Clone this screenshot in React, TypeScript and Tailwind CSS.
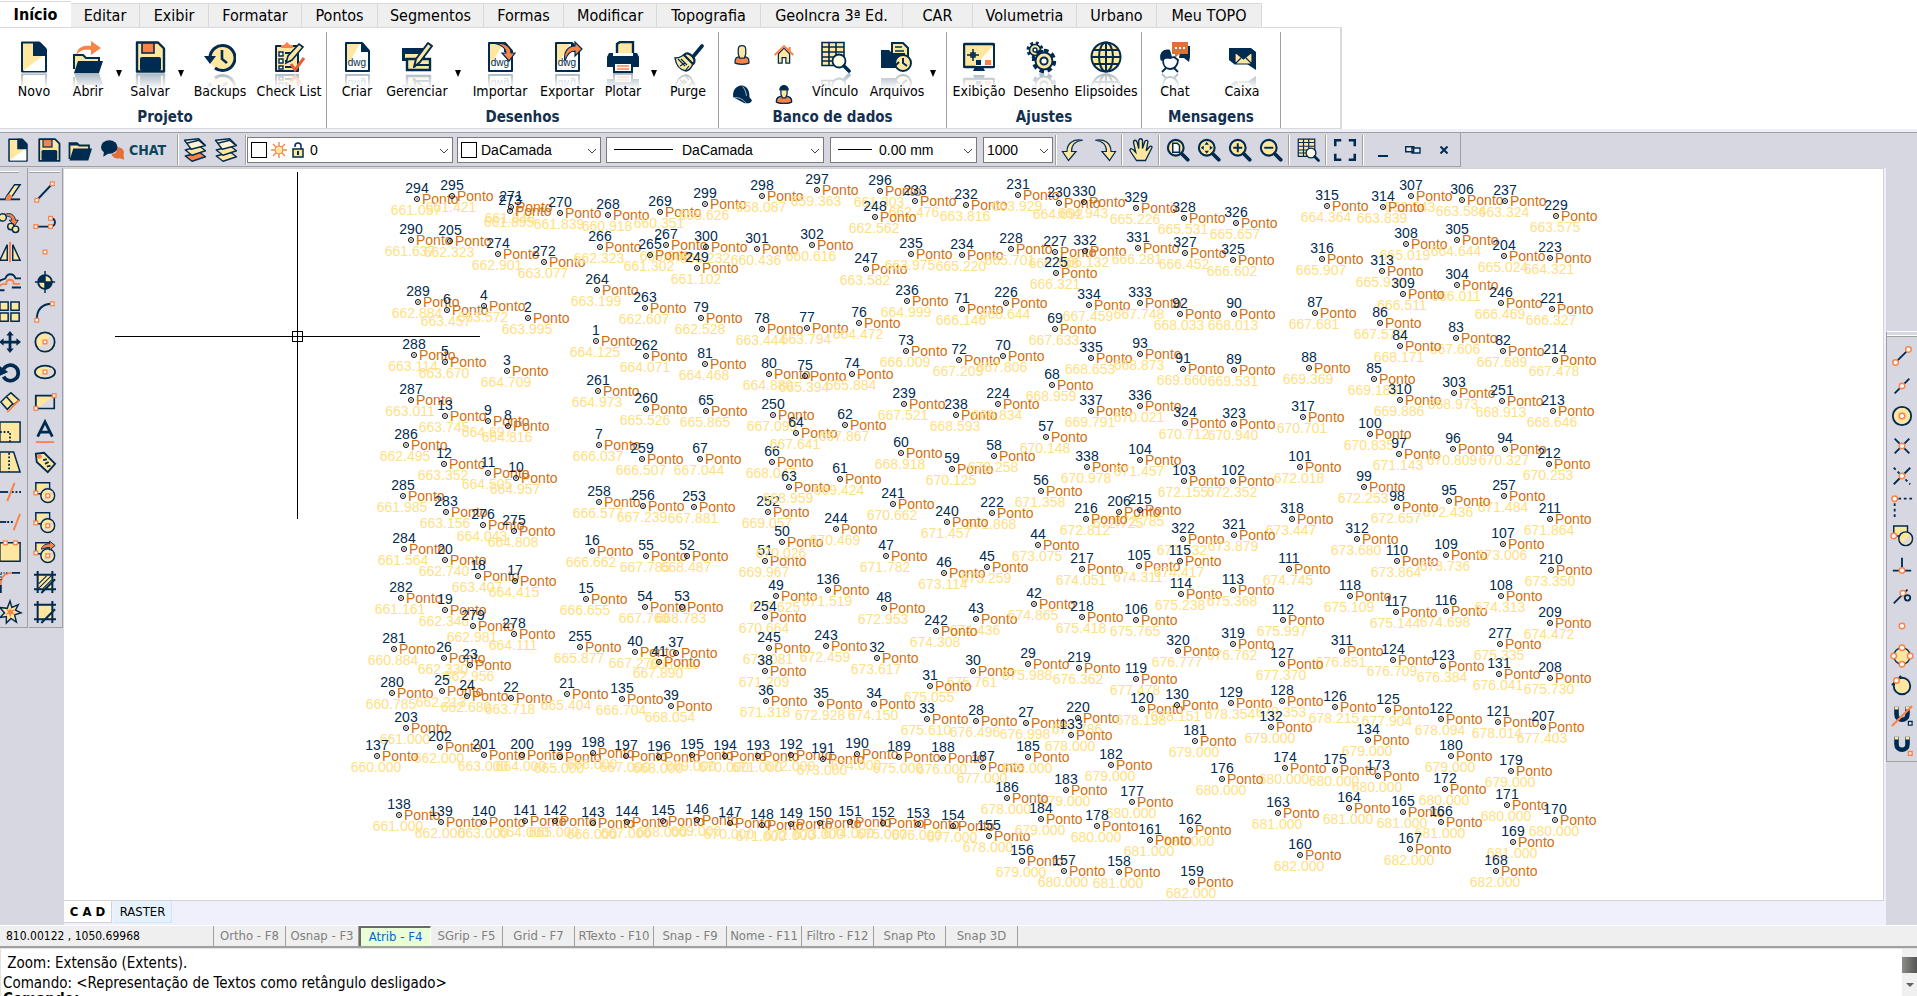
import { Fragment, ReactNode, useState } from "react";
import clsx from "clsx";

const NAVY = "#002b50";
const SAND = "#ffe7a0";
const ORANGE = "#f98348";

// id, x, y, elevation
type SurveyPoint = [number, number, number, string];

const POINTS: SurveyPoint[] = [
  [294, 353, 30, "661.057"], [295, 388, 27, "661.421"], [271, 447, 38, "661.848"], [273, 446, 42, "661.895"],
  [270, 496, 44, "661.839"], [268, 544, 46, "660.918"], [269, 596, 43, "660.351"], [299, 641, 35, "658.626"],
  [298, 698, 27, "658.087"], [290, 347, 71, "661.637"], [205, 386, 72, "662.323"], [274, 434, 85, "662.901"],
  [272, 480, 93, "663.077"], [266, 536, 78, "662.323"], [267, 602, 76, "660.888"], [265, 586, 86, "661.302"],
  [300, 642, 78, "660.232"], [301, 693, 80, "660.436"], [249, 633, 99, "661.102"], [289, 354, 133, "662.884"],
  [6, 383, 141, "663.457"], [4, 420, 137, "663.572"], [2, 464, 149, "663.995"], [264, 533, 121, "663.199"],
  [263, 581, 139, "662.607"], [79, 637, 149, "662.528"], [78, 698, 160, "663.444"], [288, 350, 186, "663.114"],
  [5, 381, 193, "663.670"], [3, 443, 202, "664.709"], [1, 532, 172, "664.125"], [262, 582, 187, "664.071"],
  [81, 641, 195, "664.468"], [80, 705, 205, "664.880"], [287, 347, 231, "663.011"], [13, 381, 247, "663.745"],
  [9, 424, 252, "664.697"], [8, 444, 257, "664.816"], [261, 534, 222, "664.973"], [260, 582, 240, "665.526"],
  [65, 642, 242, "665.865"], [250, 709, 246, "667.099"], [286, 342, 276, "662.495"], [12, 380, 295, "663.352"],
  [11, 424, 304, "664.505"], [10, 452, 309, "664.957"], [7, 535, 276, "666.037"], [259, 578, 290, "666.507"],
  [67, 636, 290, "667.044"], [66, 708, 293, "668.047"], [285, 339, 327, "661.985"], [258, 535, 333, "666.577"],
  [256, 579, 337, "667.239"], [253, 630, 338, "667.881"], [283, 382, 343, "663.156"], [252, 704, 343, "669.057"],
  [276, 419, 356, "664.043"], [275, 450, 362, "664.808"], [297, 753, 21, "659.363"], [296, 816, 22, "661.303"],
  [233, 851, 32, "662.476"], [232, 902, 36, "663.816"], [231, 954, 26, "663.929"], [230, 995, 34, "664.692"],
  [330, 1020, 33, "664.943"], [329, 1072, 39, "665.226"], [328, 1120, 49, "665.531"], [248, 811, 48, "662.562"],
  [302, 748, 76, "660.616"], [247, 802, 100, "663.582"], [235, 847, 85, "663.975"], [234, 898, 86, "665.220"],
  [228, 947, 80, "665.701"], [227, 991, 83, "666.008"], [332, 1021, 82, "666.132"], [331, 1074, 79, "666.281"],
  [327, 1121, 84, "666.452"], [225, 992, 104, "666.321"], [236, 843, 132, "664.999"], [71, 898, 140, "666.146"],
  [226, 942, 134, "666.644"], [334, 1025, 136, "667.459"], [333, 1076, 134, "667.748"], [92, 1116, 145, "668.033"],
  [77, 743, 159, "663.794"], [76, 795, 154, "664.472"], [69, 991, 160, "667.633"], [73, 842, 182, "666.009"],
  [72, 895, 191, "667.209"], [70, 939, 187, "667.806"], [335, 1027, 189, "668.653"], [93, 1076, 185, "668.873"],
  [91, 1119, 200, "669.660"], [75, 741, 207, "665.394"], [74, 788, 205, "665.884"], [68, 988, 216, "668.959"],
  [239, 840, 235, "667.521"], [238, 892, 246, "668.593"], [224, 934, 235, "668.834"], [337, 1027, 242, "669.791"],
  [336, 1076, 237, "670.021"], [324, 1121, 254, "670.712"], [64, 732, 264, "667.641"], [62, 781, 256, "667.867"],
  [57, 982, 268, "670.148"], [60, 837, 284, "668.918"], [59, 888, 300, "670.125"], [58, 930, 287, "670.258"],
  [338, 1023, 298, "670.978"], [104, 1076, 291, "671.457"], [103, 1120, 312, "672.155"], [63, 725, 318, "668.959"],
  [61, 776, 310, "669.424"], [56, 977, 322, "671.358"], [241, 829, 335, "670.662"], [222, 928, 344, "671.868"],
  [206, 1055, 343, "672.725"], [215, 1076, 341, "672.785"], [216, 1022, 350, "672.812"], [326, 1172, 54, "665.657"],
  [315, 1263, 37, "664.364"], [307, 1347, 27, "663.543"], [314, 1319, 38, "663.839"], [306, 1398, 31, "663.584"],
  [237, 1441, 32, "663.324"], [229, 1492, 47, "663.575"], [308, 1342, 75, "665.019"], [305, 1393, 71, "664.644"],
  [204, 1440, 87, "665.024"], [223, 1486, 89, "664.321"], [325, 1169, 91, "666.602"], [316, 1258, 90, "665.907"],
  [313, 1318, 102, "665.916"], [304, 1393, 116, "666.011"], [309, 1339, 125, "666.511"], [246, 1437, 134, "666.469"],
  [221, 1488, 140, "666.327"], [90, 1170, 145, "668.013"], [87, 1251, 144, "667.681"], [86, 1316, 154, "667.570"],
  [83, 1392, 169, "667.606"], [84, 1336, 177, "668.171"], [82, 1439, 182, "667.689"], [214, 1491, 191, "667.478"],
  [89, 1170, 201, "669.531"], [88, 1245, 199, "669.369"], [85, 1310, 210, "669.185"], [310, 1336, 231, "669.886"],
  [303, 1390, 224, "668.973"], [251, 1438, 232, "668.913"], [213, 1489, 242, "668.646"], [317, 1239, 248, "670.701"],
  [323, 1170, 255, "670.940"], [100, 1306, 265, "670.835"], [97, 1335, 285, "671.143"], [96, 1389, 280, "670.809"],
  [94, 1441, 280, "670.327"], [212, 1485, 295, "670.253"], [101, 1236, 298, "672.018"], [102, 1169, 312, "672.352"],
  [99, 1300, 318, "672.253"], [257, 1440, 327, "671.484"], [95, 1385, 332, "672.436"], [98, 1333, 338, "672.657"],
  [318, 1228, 350, "673.447"], [211, 1486, 350, "671.864"], [284, 340, 380, "661.564"], [20, 381, 391, "662.740"],
  [18, 414, 407, "663.407"], [17, 451, 412, "664.415"], [16, 528, 382, "666.662"], [55, 582, 387, "667.785"],
  [52, 623, 387, "668.487"], [51, 701, 392, "669.967"], [282, 337, 429, "661.161"], [19, 381, 441, "662.348"],
  [279, 409, 457, "662.981"], [278, 450, 465, "664.111"], [15, 522, 430, "666.655"], [54, 581, 438, "667.760"],
  [53, 618, 438, "668.783"], [49, 712, 427, "670.625"], [254, 701, 448, "670.664"], [281, 330, 480, "660.884"],
  [26, 380, 489, "662.330"], [23, 406, 496, "662.956"], [255, 516, 478, "665.877"], [40, 571, 483, "667.270"],
  [37, 612, 484, "668.320"], [41, 595, 493, "667.890"], [245, 705, 479, "671.081"], [38, 701, 502, "671.209"],
  [280, 328, 524, "660.785"], [25, 378, 522, "662.213"], [24, 403, 527, "662.680"], [22, 447, 529, "663.718"],
  [21, 503, 525, "665.404"], [135, 558, 530, "666.704"], [39, 607, 537, "668.054"], [36, 702, 532, "671.318"],
  [203, 342, 559, "661.000"], [202, 376, 578, "662.000"], [137, 313, 587, "660.000"], [201, 420, 586, "663.000"],
  [200, 458, 586, "664.000"], [199, 496, 588, "665.000"], [198, 529, 584, "666.000"], [197, 562, 587, "667.000"],
  [196, 595, 588, "668.000"], [195, 628, 586, "669.000"], [194, 661, 587, "670.000"], [193, 694, 587, "671.000"],
  [192, 727, 586, "672.000"], [191, 759, 590, "673.000"], [190, 793, 585, "674.000"], [189, 835, 588, "675.000"],
  [188, 879, 589, "676.000"], [187, 919, 598, "677.000"], [185, 964, 588, "678.000"], [138, 335, 646, "661.000"],
  [139, 377, 653, "662.000"], [140, 420, 653, "663.000"], [141, 461, 652, "664.000"], [142, 491, 652, "665.000"],
  [143, 529, 654, "666.000"], [144, 563, 653, "667.000"], [145, 599, 652, "668.000"], [146, 633, 651, "669.000"],
  [147, 666, 654, "670.000"], [148, 698, 656, "671.000"], [149, 727, 655, "672.000"], [150, 756, 654, "673.000"],
  [151, 786, 653, "674.000"], [152, 819, 654, "675.000"], [153, 854, 655, "676.000"], [154, 889, 657, "677.000"],
  [155, 925, 667, "678.000"], [156, 958, 692, "679.000"], [157, 1000, 702, "680.000"], [158, 1055, 703, "681.000"],
  [159, 1128, 713, "682.000"], [50, 718, 373, "670.026"], [244, 772, 360, "670.469"], [240, 883, 353, "671.457"],
  [44, 974, 376, "673.075"], [47, 822, 387, "671.782"], [46, 880, 404, "673.114"], [45, 923, 398, "673.259"],
  [217, 1018, 400, "674.051"], [105, 1075, 397, "674.311"], [322, 1119, 370, "673.732"], [115, 1116, 392, "674.417"],
  [114, 1117, 425, "675.238"], [136, 764, 421, "671.519"], [48, 820, 439, "672.953"], [43, 912, 450, "674.436"],
  [42, 970, 435, "674.865"], [242, 872, 462, "674.308"], [218, 1018, 448, "675.418"], [106, 1072, 451, "675.765"],
  [243, 762, 477, "672.459"], [32, 813, 489, "673.617"], [30, 909, 502, "675.761"], [29, 964, 495, "675.988"],
  [219, 1015, 499, "676.362"], [119, 1072, 510, "677.478"], [320, 1114, 482, "676.777"], [31, 866, 517, "675.055"],
  [35, 757, 535, "672.928"], [34, 810, 535, "674.150"], [33, 863, 550, "675.610"], [28, 912, 552, "676.496"],
  [27, 962, 554, "676.998"], [220, 1014, 549, "677.786"], [133, 1007, 566, "678.000"], [120, 1078, 540, "678.198"],
  [130, 1113, 536, "678.151"], [181, 1131, 572, "679.000"], [182, 1047, 596, "679.000"], [183, 1002, 621, "679.000"],
  [186, 943, 629, "678.000"], [177, 1068, 633, "680.000"], [184, 977, 650, "679.000"], [178, 1033, 657, "680.000"],
  [162, 1126, 661, "680.000"], [161, 1086, 671, "681.000"], [321, 1170, 366, "673.879"], [312, 1293, 370, "673.680"],
  [110, 1333, 392, "673.864"], [109, 1382, 386, "673.736"], [107, 1439, 375, "673.006"], [210, 1487, 401, "673.350"],
  [111, 1225, 400, "674.745"], [113, 1169, 421, "675.368"], [118, 1286, 427, "675.109"], [117, 1332, 443, "675.144"],
  [116, 1382, 442, "674.698"], [108, 1437, 427, "674.313"], [209, 1486, 454, "674.472"], [112, 1219, 451, "675.997"],
  [319, 1169, 475, "676.762"], [311, 1278, 482, "676.851"], [124, 1329, 491, "676.709"], [123, 1379, 497, "676.384"],
  [277, 1436, 475, "675.335"], [131, 1435, 505, "676.041"], [208, 1486, 509, "675.730"], [127, 1218, 495, "677.370"],
  [129, 1167, 534, "678.354"], [128, 1218, 532, "678.353"], [126, 1271, 538, "678.215"], [125, 1324, 541, "677.904"],
  [122, 1377, 550, "678.094"], [121, 1434, 553, "678.014"], [207, 1479, 558, "677.403"], [132, 1207, 558, "679.000"],
  [134, 1304, 571, "679.000"], [180, 1387, 587, "679.000"], [174, 1221, 599, "680.000"], [175, 1271, 601, "680.000"],
  [173, 1314, 607, "680.000"], [179, 1447, 602, "679.000"], [176, 1158, 610, "680.000"], [172, 1381, 620, "680.000"],
  [163, 1214, 644, "681.000"], [164, 1285, 639, "681.000"], [165, 1339, 643, "681.000"], [166, 1377, 653, "681.000"],
  [171, 1443, 636, "680.000"], [170, 1491, 651, "680.000"], [169, 1449, 673, "681.000"], [168, 1432, 702, "682.000"],
  [167, 1346, 680, "682.000"], [160, 1236, 686, "682.000"],
];

const dwgPage = (
  <>
    <path d="M5 2h16l7 8v20H5z" fill="#fff" stroke={NAVY} strokeWidth="2" strokeLinejoin="round" />
    <path d="M6 3h13L6 25z" fill={SAND} />
    <path d="M20 2h2l6 7v2h-8z" fill={NAVY} />
    <text x="16" y="25" textAnchor="middle" fontSize="10" fontFamily="Liberation Sans, sans-serif" fill={NAVY}>
      dwg
    </text>
  </>
);

const newPage = (
  <>
    <path d="M4 1.5h17l7 7v22H4z" fill={SAND} stroke={NAVY} strokeWidth="2" strokeLinejoin="round" />
    <path d="M5 30L27 13v17z" fill="#fff" />
    <path d="M15 1h7l6 6v8H15z" fill={NAVY} />
  </>
);

const floppy = (
  <>
    <path d="M3 1.5h21l6 6v23H3z" fill={SAND} stroke={NAVY} strokeWidth="2.4" strokeLinejoin="round" />
    <rect x="8" y="2" width="12" height="10" fill={ORANGE} stroke={NAVY} strokeWidth="1.6" />
    <rect x="6" y="16" width="21" height="14" rx="2" fill={NAVY} />
  </>
);

const folder = (
  <>
    <path d="M2 28V7h10l3 3h13v6" fill={SAND} stroke={NAVY} strokeWidth="2.4" />
    <path d="M2 7h10l3 3H2z" fill={NAVY} />
    <path d="M7 14h25l-5 16H2z" fill={NAVY} />
  </>
);

const gridSheet = (
  <>
    <path d="M3 1.5h22v23H3z" fill={SAND} />
    <path d="M3 1.5h22v23H3zM3 6h22M3 11h22M3 16h22M3 20h22M10 2v23M17 2v23" fill="none" stroke={NAVY} strokeWidth="1.6" />
    <circle cx="20" cy="20" r="6.5" fill="#fffbe8" stroke={NAVY} strokeWidth="1.8" />
    <path d="M25 25l5 5" stroke={NAVY} strokeWidth="3.6" strokeLinecap="round" />
  </>
);

const clock = (
  <>
    <circle cx="18" cy="17" r="12" fill={SAND} />
    <path d="M6 17a12.500 12.500 0 1 1 5 10" fill="none" stroke={NAVY} strokeWidth="3" />
    <path d="M0 15h12l-6 8z" fill={NAVY} />
    <path d="M18 9v9l5 4" fill="none" stroke={NAVY} strokeWidth="2.6" />
  </>
);

const lens = (inner: ReactNode) => (
  <>
    <circle cx="13" cy="13" r="10.5" fill={SAND} stroke={NAVY} strokeWidth="2.8" />
    <path d="M21 21l8 8" stroke={NAVY} strokeWidth="5" strokeLinecap="round" />
    {inner}
  </>
);

const layers = (bottom: string) => (
  <g stroke={NAVY} strokeWidth="1.8" strokeLinejoin="round">
    <path d="M3 24l19-5 8 6-18 6z" fill={bottom} />
    <path d="M3 16l19-5 8 6-18 6z" fill={SAND} />
    <path d="M2 3l19-2 9 9-19 5z" fill="#fff5d2" />
    <path d="M5 7l16-4 8 7" fill="none" />
  </g>
);

const icons: Record<string, ReactNode> = {
  novo: newPage,
  abrir: (
    <>
      <path d="M4 14C6 6 11 4 19 5V0l10 7-10 7V9C12 8 8 9 4 14z" fill={ORANGE} />
      <path d="M2 28V14h9l3 3h13v3" fill={SAND} stroke={NAVY} strokeWidth="2" />
      <path d="M6 20h25l-4 12H2z" fill={NAVY} />
    </>
  ),
  salvar: floppy,
  folder,
  backups: clock,
  checklist: (
    <>
      <path d="M3 5h22v25H3z" fill={SAND} stroke={NAVY} strokeWidth="2" strokeLinejoin="round" />
      <path d="M8 7V4h3l3-3 3 3h3v3z" fill={ORANGE} />
      <path d="M6 11h4v4H6zM6 18h4v4H6zM6 25h4v3H6z" fill="#fff" stroke={NAVY} strokeWidth="1.4" />
      <path d="M12 12h8M12 20h6M12 26h9" stroke={NAVY} strokeWidth="2" />
      <path d="M13 22l2-7L26 3l4 3-11 13z" fill={SAND} stroke={NAVY} strokeWidth="1.6" />
      <path d="M18 23l4 6 9-12" fill="none" stroke="#e0603a" strokeWidth="3" />
    </>
  ),
  dwg: dwgPage,
  gerenciar: (
    <>
      <path d="M1 7h23v13H1z" fill={NAVY} />
      <path d="M4 13h15v4H4z" fill={SAND} />
      <path d="M6 18h23v11H6z" fill={SAND} stroke={NAVY} strokeWidth="2.4" />
      <path d="M15 24h13" stroke={NAVY} strokeWidth="2" />
      <path d="M13 26l2-8L27 2l4 3-12 16z" fill={SAND} stroke={NAVY} strokeWidth="2" strokeLinejoin="round" />
    </>
  ),
  importar: (
    <>
      {dwgPage}
      <path d="M13 3c8-2 14 3 14 9h4l-6 8-7-8h4c0-4-3-7-9-9z" fill={ORANGE} stroke={NAVY} strokeWidth="1.2" />
    </>
  ),
  exportar: (
    <>
      {dwgPage}
      <path d="M14 20c-2-9 3-15 10-15V1l7 7-7 7v-5c-5 0-8 3-10 10z" fill={ORANGE} stroke={NAVY} strokeWidth="1.2" />
    </>
  ),
  plotar: (
    <>
      <path d="M10 12V3l3-2h13v11" fill={SAND} stroke={NAVY} strokeWidth="2.4" />
      <path d="M2 12h4v3h20v-3h4l2 4v10H0V16z" fill={NAVY} />
      <path d="M7 22h18v9H7z" fill="#fff" stroke={NAVY} strokeWidth="2" />
      <path d="M10 25h12M10 28h12" stroke={ORANGE} strokeWidth="1.6" />
    </>
  ),
  purge: (
    <>
      <path d="M30 5L20 17" stroke={NAVY} strokeWidth="3.6" strokeLinecap="round" />
      <path d="M12 14l9 8c-1 4-3 7-7 8-6-1-10-6-11-13 3 0 6-1 9-3z" fill={SAND} stroke={NAVY} strokeWidth="1.4" />
      <path d="M6 18l7 7M9 18l6 6M8 25l5-3M13 30l4-5" stroke={NAVY} strokeWidth="1.2" />
      <path d="M12 14c3-3 6-1 8 1s4 5 1 8z" fill={SAND} stroke={NAVY} strokeWidth="2.2" />
    </>
  ),
  vinculo: gridSheet,
  arquivos: (
    <>
      <path d="M11 12V2h11l5 5v8H11" fill={SAND} stroke={NAVY} strokeWidth="2" />
      <path d="M14 6h7M14 10h9" stroke={NAVY} strokeWidth="1.6" />
      <path d="M0 9h8l3 3h13v15H0z" fill={NAVY} />
      <circle cx="22" cy="22" r="8" fill={SAND} stroke={NAVY} strokeWidth="2" />
      <path d="M22 17v5l4 3M11 20l3 5 4-4" fill="none" stroke={NAVY} strokeWidth="2" />
    </>
  ),
  exibicao: (
    <>
      <rect x="1" y="3" width="30" height="23" rx="1" fill={SAND} stroke={NAVY} strokeWidth="2.4" />
      <path d="M30 5v20H12z" fill="#fff" />
      <path d="M4 14h12M10 8v12M8 12h4v4H8z" fill="none" stroke={NAVY} strokeWidth="1.5" />
      <path d="M13 19h5v5h-5z" fill={NAVY} />
      <path d="M22 19h6v5h-6z" fill={ORANGE} />
      <path d="M12 26h8l2 4H10z" fill={NAVY} />
    </>
  ),
  desenho: (
    <>
      <circle cx="10" cy="9" r="6.5" fill="none" stroke={NAVY} strokeWidth="4" strokeDasharray="2.6 2.5" />
      <circle cx="10" cy="9" r="5.5" fill={SAND} stroke={NAVY} strokeWidth="1.6" />
      <circle cx="10" cy="9" r="2" fill="#fff" stroke={NAVY} strokeWidth="1.4" />
      <circle cx="19" cy="20" r="10" fill="none" stroke={NAVY} strokeWidth="4.4" strokeDasharray="4.4 3.4" />
      <circle cx="19" cy="20" r="8.5" fill={SAND} stroke={NAVY} strokeWidth="2" />
      <circle cx="19" cy="20" r="3.6" fill="#fff" stroke={NAVY} strokeWidth="2" />
    </>
  ),
  elipsoides: (
    <>
      <circle cx="16" cy="16" r="14.5" fill={SAND} />
      <g fill="none" stroke={NAVY} strokeWidth="2">
        <circle cx="16" cy="16" r="14.5" />
        <ellipse cx="16" cy="16" rx="7" ry="14.5" />
        <path d="M16 1v30M1 16h30M4 9h24M4 23h24" />
      </g>
    </>
  ),
  chat: (
    <>
      <path d="M22 5h9v11l-1 5-5-4h-5z" fill={NAVY} />
      <path d="M13 1h16v12h-9l-4 4v-4h-3z" fill="#e07038" />
      <path d="M16 7h2M20 7h2M24 7h2" stroke="#fff" strokeWidth="2" />
      <path d="M4 19c0 6 3 9 7 9s8-3 8-9l-4-3-4 1-5-1z" fill="#fff" stroke={NAVY} strokeWidth="1.8" />
      <path d="M2 20c-3-7 2-13 9-11l2 7-7 2z" fill={NAVY} />
      <path d="M3 31l4-4M19 31l-4-4" stroke={NAVY} strokeWidth="1.8" />
    </>
  ),
  caixa: (
    <>
      <path d="M3 7h22l5 4v18l-9-6H8l-5-4z" fill={NAVY} />
      <path d="M9 11h17v12H9zM9 11l8.500 7L26 11M9 23l6-6M26 23l-6-6" fill={SAND} stroke={NAVY} strokeWidth="1.2" />
    </>
  ),
  pessoa: (
    <>
      <path d="M5 29c-1-8 3-11 11-11s12 3 11 11c-6 2-16 2-22 0z" fill={ORANGE} stroke={NAVY} strokeWidth="2" />
      <path d="M10 7c0-8 12-8 12 0v6c0 4-2 5-2 8h-8c0-3-2-4-2-8z" fill={SAND} stroke={NAVY} strokeWidth="2" />
    </>
  ),
  casa: (
    <>
      <path d="M7 14l9-9 9 9v15h-6v-9h-6v9H7z" fill={SAND} stroke={NAVY} strokeWidth="2" />
      <path d="M1 16L16 2l15 14M25 3v7" fill="none" stroke={ORANGE} strokeWidth="3.4" />
    </>
  ),
  capacete: (
    <>
      <path d="M2 21C0 9 9 0 19 3c8 3 9 11 9 18l4 5c-2 6-10 6-15 3z" fill={NAVY} />
      <path d="M3 22c8-1 14 2 19 8M17 4c4 5 6 10 6 15" fill="none" stroke="#d8e4ee" strokeWidth="1.2" />
    </>
  ),
  operario: (
    <>
      <path d="M4 29c-1-7 4-10 12-10s13 3 12 10c-6 3-18 3-24 0z" fill={ORANGE} stroke={NAVY} strokeWidth="2.4" />
      <path d="M11 9h10v6c0 3-2 4-2 7h-6c0-3-2-4-2-7z" fill={SAND} stroke={NAVY} strokeWidth="2" />
      <path d="M8 10c1-11 15-11 16 0z" fill={NAVY} />
    </>
  ),
  bubbles: (
    <>
      <path d="M20 12c9 0 12 5 10 11l1 6-6-2c-6 1-10-1-11-6 6 1 8-3 6-9z" fill="#e07038" />
      <ellipse cx="11" cy="12" rx="11" ry="9" fill={NAVY} />
      <path d="M4 17l-1 8 8-5z" fill={NAVY} />
    </>
  ),
  layersOn: layers(ORANGE),
  layersOff: layers(SAND),
  undo: <path d="M29 3C18 4 14 9 14 18h6L10 30 2 18h6C8 7 16 1 29 3z" fill={SAND} stroke={NAVY} strokeWidth="1.6" />,
  redo: <path d="M3 3c11 1 15 6 15 15h-6l10 12 8-12h-6C24 7 16 1 3 3z" fill={SAND} stroke={NAVY} strokeWidth="1.6" />,
  hand: (
    <path
      d="M10 30l-8-12c-2-4 1-5 4-2l3 3-3-13c0-4 4-4 5 0l2 8V4c0-4 5-4 5 0v10l3-9c1-3 5-2 4 1l-2 11 4-5c2-2 5-1 3 2l-6 12-2 4z"
      fill={SAND}
      stroke={NAVY}
      strokeWidth="1.8"
    />
  ),
  zoomWin: lens(<path d="M9 7h6l3 3v9H9z" fill="#fff" stroke={NAVY} strokeWidth="2" />),
  zoomExt: lens(<path d="M13 5l3 4h-6zM13 21l3-4h-6zM5 13l4-3v6zM21 13l-4-3v6z" fill={NAVY} />),
  zoomIn: lens(<path d="M7 13h12M13 7v12" stroke={NAVY} strokeWidth="2.6" />),
  zoomOut: lens(<path d="M7 13h12" stroke={NAVY} strokeWidth="2.6" />),
  fullscreen: <path d="M3 11V3h8M21 3h8v8M29 21v8h-8M11 29H3v-8" fill="none" stroke={NAVY} strokeWidth="3.4" />,
};

// square and round grips used by the drawing and snap icons
const Grip = ({ x, y }: { x: number; y: number }) => (
  <rect x={x - 2} y={y - 2} width="4" height="4" fill="#fff" stroke={ORANGE} strokeWidth="1.4" />
);
const Snap = ({ x, y }: { x: number; y: number }) => (
  <circle cx={x} cy={y} r="3" fill="#fff" stroke={ORANGE} strokeWidth="1.6" />
);

const line = { fill: "none", stroke: NAVY, strokeWidth: 2 };
const shape = { fill: SAND, stroke: NAVY, strokeWidth: 1.6 };

const overlapShapes = (
  <>
    <path d="M2 2h15v12H2z" {...shape} />
    <path d="M16 3v10H5z" fill="#d7d7e1" />
    <circle cx="15" cy="16" r="7.500" {...shape} />
    <path d="M10 20l10-9c2 6-3 11-10 9z" fill="#d7d7e1" />
    <Grip x={2} y={13} />
  </>
);

const editTools: [string, ReactNode][] = [
  ["Apagar", <><path d="M0 20h23" {...line} /><path d="M8 17L17 4h6L12 20H7z" {...shape} /><path d="M8 17l3-3 4 3-3 4H7z" fill={ORANGE} /></>],
  ["Copiar", <><path d="M6 4c6-3 11 0 12 6h3l-4 6-6-6h3c0-3-3-5-8-4z" fill={ORANGE} stroke={NAVY} strokeWidth="1" /><circle cx="4" cy="7" r="4" {...shape} /><circle cx="13" cy="17" r="3.500" {...shape} /><circle cx="18" cy="20" r="3.500" {...shape} /></>],
  ["Espelhar", <><path d="M9 4v17H1zM15 4l8 17h-8z" {...shape} /><path d="M12 1v22" stroke={ORANGE} strokeWidth="2.2" /></>],
  ["Offset", <><path d="M0 12c2-4 5-2 7-4 2-6 9-6 11 0h6" {...line} /><path d="M0 18c1-5 5-3 8-4 0-6 8-6 8 0l7 0" fill="none" stroke={ORANGE} strokeWidth="2" /><path d="M0 21h6M14 18h10" {...line} /></>],
  ["Matriz", <path d="M1 1h9v9H1zM13 1h9v9h-9zM1 13h9v9H1zM13 13h9v9h-9z" {...shape} />],
  ["Mover", <path d="M12 0l4 5h-2.500v5.500H19V8l5 4-5 4v-2.500h-5.500V19H16l-4 5-4-5h2.500v-5.500H5V16l-5-4 5-4v2.500h5.500V5H8z" fill={NAVY} />],
  ["Girar", <><path d="M5 9a8.500 8.500 0 1 1 0 8" fill="none" stroke={NAVY} strokeWidth="4" /><path d="M0 5l10 7-9 4z" fill={NAVY} /></>],
  ["Alinhar", <><path d="M8 6l5-4 9 8-6 5zM2 12l6-6 7 8-6 6z" {...shape} /><path d="M9 23l13-13" stroke={ORANGE} strokeWidth="2" /></>],
  ["Escala", <><path d="M1 1h22v22H1z" {...shape} /><path d="M1 12h11v11" {...line} strokeDasharray="2 2" /></>],
  ["Esticar", <><path d="M1 1h15l7 22H1z" {...shape} /><path d="M11 2v21" {...line} strokeDasharray="2 2" /></>],
  ["Aparar", <><path d="M0 12h10" {...line} /><path d="M14 12h10" {...line} strokeDasharray="2 2" /><path d="M17 2L9 22" stroke={ORANGE} strokeWidth="2.2" /></>],
  ["Estender", <><path d="M0 12h8" {...line} /><path d="M9 12h8" {...line} strokeDasharray="2 2" /><path d="M23 3l-7 18" stroke={ORANGE} strokeWidth="2.2" /></>],
  ["Quebrar", <><path d="M1 2h22v20H1z" {...shape} /><Grip x={7} y={2} /><Grip x={18} y={2} /></>],
  ["Concordar", <><path d="M14 2h9M2 15v9" {...line} /><path d="M2 15C2 7 6 2 14 2" fill="none" stroke={ORANGE} strokeWidth="2" /><path d="M2 2h9M2 3v9" {...line} strokeDasharray="1 2" /></>],
  ["Explodir", <><path d="M12 0l2 7 7-3-3 6 6 3-7 2 2 8-6-4-5 5V17l-7 1 5-5-5-6 8 1z" {...shape} /><path d="M12 7l1 3 4-1-2 3 3 3-4-1-2 4-1-4-4 1 3-3-2-3 3 1z" fill={ORANGE} /></>],
];

const drawTools: [string, ReactNode][] = [
  ["Linha", <><path d="M3 21L20 3" {...line} /><Grip x={3} y={21} /><Grip x={20} y={3} /></>],
  ["Polilinha", <><path d="M2 17h16c7 0 6-10 0-9" {...line} /><Grip x={2} y={17} /><Grip x={18} y={17} /><Grip x={18} y={8} /></>],
  ["Ponto", <Grip x={12} y={12} />],
  ["Ponto cotado", <><circle cx="12" cy="12" r="7.500" {...shape} strokeWidth={2} /><path d="M12 12V4.500A7.500 7.500 0 0 0 4.500 12zM12 12v7.500a7.500 7.500 0 0 0 7.500-7.500z" fill={NAVY} /><path d="M12 0v24M1 12h22" stroke={NAVY} strokeWidth="1.6" /></>],
  ["Arco", <><path d="M3 21C3 10 8 3 20 3" {...line} /><Grip x={3} y={21} /><Grip x={20} y={3} /></>],
  ["Círculo", <><circle cx="12" cy="12" r="10.500" {...shape} strokeWidth={2} /><path d="M5 19L19 5a10 10 0 0 1-14 14z" fill="#dcdae0" /><Grip x={12} y={12} /></>],
  ["Elipse", <><ellipse cx="12" cy="12" rx="11" ry="7" {...shape} strokeWidth={2} /><path d="M6 17L19 7c5 4 1 12-13 10z" fill="#dcdae0" /><Grip x={12} y={12} /></>],
  ["Retângulo", <><path d="M2 5h20v14H2z" {...shape} strokeWidth={2} /><path d="M21 6v12H5z" fill="#dcdae0" /><Grip x={22} y={5} /><Grip x={2} y={19} /></>],
  ["Texto", <><path d="M4 17L12 1l8 16M7 12h10" fill="none" stroke={NAVY} strokeWidth="3" /><path d="M2 23h20" stroke={ORANGE} strokeWidth="2" /></>],
  ["Etiqueta", <><path d="M2 3l9-1 12 12-8 9L3 12z" {...shape} strokeWidth={2} /><circle cx="6" cy="6" r="2.500" fill={ORANGE} /><path d="M10 10l4-1M12 14l4-2M14 17l4-1" stroke={NAVY} strokeWidth="2" /></>],
  ["Bloco", <>{overlapShapes}<Grip x={15} y={16} /></>],
  ["Inserir bloco", <>{overlapShapes}<Grip x={15} y={16} /></>],
  ["Exportar bloco", <>{overlapShapes}<Grip x={15} y={16} /><path d="M8 9c1-5 6-6 9-6V0l6 5-6 5V7c-4 0-6 1-9 2z" fill={ORANGE} stroke={NAVY} strokeWidth="1" /></>],
  ["Hachura", <><path d="M4 4h16v16H4z" fill={SAND} /><path d="M5 14l9-9M5 19L19 5M10 19l9-9" stroke={NAVY} strokeWidth="1.200" /><path d="M4 0v24M20 0v24M0 4h24M0 20h24M8 24L23 9" stroke={NAVY} strokeWidth="2.2" /></>],
  ["Contorno", <><path d="M4 4h16v16H4z" fill={SAND} /><path d="M4 0v24M20 0v24M0 4h24M0 20h24M8 24L23 9" stroke={NAVY} strokeWidth="2.2" /></>],
];

const magnet = <path d="M6 2v8c0 8 12 8 12 0V2" fill="none" stroke={NAVY} strokeWidth="5" />;
const magnetTips = <path d="M4 2h4v3H4zM16 2h4v3h-4z" fill={SAND} />;

const snapTools: [string, ReactNode][] = [
  ["Extremidade", <><path d="M5 19L19 5" {...line} /><Snap x={5} y={19} /><Snap x={19} y={5} /></>],
  ["Meio", <><path d="M4 20L20 4" {...line} /><Snap x={12} y={12} /></>],
  ["Centro", <><circle cx="12" cy="12" r="10" {...shape} strokeWidth={2} /><circle cx="12" cy="12" r="5" fill="#ffd9a0" /><Snap x={12} y={12} /></>],
  ["Interseção", <><path d="M4 4l16 16M4 20L20 4" {...line} /><Snap x={12} y={12} /></>],
  ["Interseção aparente", <><path d="M3 3l18 18" {...line} strokeDasharray="3 3" /><path d="M3 21L21 3" {...line} /><Snap x={12} y={12} /></>],
  ["Extensão", <><path d="M8 4h16M4 9v16" {...line} strokeDasharray="3 3" /><Snap x={4} y={4} /></>],
  ["Inserção", <><path d="M3 1h15v11H3z" {...shape} /><circle cx="16" cy="15" r="7.500" {...shape} /><path d="M12 20l9-9c2 6-3 12-9 9z" fill="#dcdae0" /><Snap x={3} y={12} /></>],
  ["Perpendicular", <><path d="M12 3v14M2 17h20" {...line} /><Snap x={12} y={17} /></>],
  ["Paralelo", <><path d="M3 20L18 5" {...line} /><Snap x={13} y={9} /><circle cx="18" cy="14" r="3" {...line} /></>],
  ["Nó", <Snap x={12} y={12} />],
  ["Quadrante", <><circle cx="12" cy="12" r="9" {...shape} /><Snap x={12} y={3} /><Snap x={12} y={21} /><Snap x={3} y={12} /><Snap x={21} y={12} /></>],
  ["Tangente", <><circle cx="12" cy="12" r="9" {...shape} strokeWidth={2} /><path d="M1 11L11 1" {...line} /><Snap x={6} y={6} /></>],
  ["Desligar snap", <>{magnet}{magnetTips}<path d="M1 23L23 1" stroke={ORANGE} strokeWidth="2.400" /><path d="M19 18h4v4h-4z" fill="#fff" stroke={NAVY} strokeWidth="1.4" /></>],
  ["Ligar snap", <>{magnet}{magnetTips}<path d="M19 18h4v4h-4z" fill="#fff" stroke={ORANGE} strokeWidth="1.6" /></>],
];

function Icon({ name, className }: { name: string; className: string }) {
  return (
    <svg viewBox="0 0 32 32" className={className} aria-hidden="true">
      {icons[name]}
    </svg>
  );
}

interface RibbonItem {
  label: string;
  icon: string;
  width: string;
  menu?: boolean;
}

function RibbonButton({ label, icon, width, menu }: RibbonItem) {
  return (
    <>
      <button className={clsx("relative flex shrink-0 flex-col items-center", width)}>
        <Icon name={icon} className="size-8" />
        <span className="absolute top-8 h-4 overflow-hidden opacity-35 [mask-image:linear-gradient(#000,transparent)]">
          <Icon name={icon} className="size-8 -scale-y-100" />
        </span>
        <span className="relative mt-2 whitespace-nowrap text-sm">{label}</span>
      </button>
      {menu && (
        <button className="flex w-2 shrink-0 justify-center pt-7" aria-label={`Mais opções de ${label}`}>
          <svg viewBox="0 0 8 8" className="size-2">
            <path d="M1 1h6L4 8z" />
          </svg>
        </button>
      )}
    </>
  );
}

interface RibbonGroupProps {
  title: string;
  width: string;
  align?: string;
  children: ReactNode;
}

function RibbonGroup({ title, width, align = "justify-center", children }: RibbonGroupProps) {
  return (
    <section className={clsx("mt-1 flex h-24 shrink-0 flex-col border-r border-[#a0a0a0] pt-[9px]", width)}>
      <div className={clsx("flex h-[66px]", align)}>{children}</div>
      <h2 className="text-center text-[15px] leading-5 font-bold text-[#14304f]">{title}</h2>
    </section>
  );
}

const tabs: [string, string][] = [
  ["Início", "w-[71px]"],
  ["Editar", "w-[69px]"],
  ["Exibir", "w-[69px]"],
  ["Formatar", "w-[93px]"],
  ["Pontos", "w-[76px]"],
  ["Segmentos", "w-[106px]"],
  ["Formas", "w-[80px]"],
  ["Modificar", "w-[93px]"],
  ["Topografia", "w-[104px]"],
  ["GeoIncra 3ª Ed.", "w-[142px]"],
  ["CAR", "w-[70px]"],
  ["Volumetria", "w-[104px]"],
  ["Urbano", "w-[80px]"],
  ["Meu TOPO", "w-[105px]"],
];

function Ribbon() {
  const [active, setActive] = useState("Início");

  return (
    <header>
      <nav className="flex h-[27px] items-end">
        {tabs.map(([name, width]) => (
          <button
            key={name}
            onClick={() => setActive(name)}
            className={clsx(
              "shrink-0 whitespace-nowrap text-base leading-5",
              width,
              name === active
                ? "h-[26px] border-t border-[#d9d9d9] bg-white font-bold"
                : "h-6 border-r border-t border-[#d9d9d9] bg-[#efefef]"
            )}
          >
            {name}
          </button>
        ))}
      </nav>
      <div className="flex h-[102px] w-fit border-b border-r-2 border-t border-[#d9d9d9] pr-[59px]">
        <RibbonGroup title="Projeto" width="w-[327px] pl-1">
          <RibbonButton label="Novo" icon="novo" width="w-[54px]" />
          <RibbonButton label="Abrir" icon="abrir" width="w-[54px]" menu />
          <RibbonButton label="Salvar" icon="salvar" width="w-[54px]" menu />
          <RibbonButton label="Backups" icon="backups" width="w-[70px]" />
          <RibbonButton label="Check List" icon="checklist" width="w-[68px]" />
        </RibbonGroup>
        <RibbonGroup title="Desenhos" width="w-[392px]" align="justify-end">
          <RibbonButton label="Criar" icon="dwg" width="w-[46px]" />
          <RibbonButton label="Gerenciar" icon="gerenciar" width="w-[74px]" menu />
          <RibbonButton label="Importar" icon="importar" width="w-[76px]" />
          <RibbonButton label="Exportar" icon="exportar" width="w-[58px]" />
          <RibbonButton label="Plotar" icon="plotar" width="w-[54px]" menu />
          <RibbonButton label="Purge" icon="purge" width="w-[60px]" />
        </RibbonGroup>
        <RibbonGroup title="Banco de dados" width="w-[228px]" align="pl-[2px]">
          <div className="grid w-[84px] grid-cols-2 gap-y-4 pt-1">
            {["pessoa", "casa", "capacete", "operario"].map((name) => (
              <button key={name} className="flex h-5 justify-center" aria-label={name}>
                <Icon name={name} className="size-5" />
              </button>
            ))}
          </div>
          <RibbonButton label="Vínculo" icon="vinculo" width="w-[60px]" />
          <RibbonButton label="Arquivos" icon="arquivos" width="w-[64px]" menu />
        </RibbonGroup>
        <RibbonGroup title="Ajustes" width="w-[195px]">
          <RibbonButton label="Exibição" icon="exibicao" width="w-[62px]" />
          <RibbonButton label="Desenho" icon="desenho" width="w-[62px]" />
          <RibbonButton label="Elipsoides" icon="elipsoides" width="w-[68px]" />
        </RibbonGroup>
        <RibbonGroup title="Mensagens" width="w-[139px]" align="justify-start">
          <RibbonButton label="Chat" icon="chat" width="w-[66px]" />
          <RibbonButton label="Caixa" icon="caixa" width="w-[68px]" />
        </RibbonGroup>
      </div>
    </header>
  );
}

interface ComboProps {
  label: string;
  value: string;
  width: string;
  padding: string;
  children?: ReactNode;
}

function Combo({ label, value, width, padding, children }: ComboProps) {
  return (
    <div className={clsx("relative shrink-0", width)}>
      <select
        aria-label={label}
        className={clsx(
          "block h-[26px] w-full appearance-none border border-[#7a7a7a] bg-white font-['Liberation_Sans',Arial,sans-serif] text-sm",
          padding
        )}
      >
        <option>{value}</option>
      </select>
      <div className="pointer-events-none absolute inset-y-0 left-1 flex items-center gap-1">{children}</div>
      <svg viewBox="0 0 10 6" className="pointer-events-none absolute right-1 top-[11px] h-[6px] w-[10px]">
        <path d="M1 1l4 4 4-4" fill="none" stroke="#444" />
      </svg>
    </div>
  );
}

const Swatch = () => <span className="size-4 border border-black bg-white" />;
const Divider = () => <span className="h-[30px] w-[2px] shrink-0 border-l border-[#a0a0a0] bg-white" />;

function ToolButton({ icon, label, width = "w-[31px]" }: { icon: string; label: string; width?: string }) {
  return (
    <button aria-label={label} className={clsx("flex shrink-0 justify-center", width)}>
      <Icon name={icon} className="size-6" />
    </button>
  );
}

function Toolbar() {
  return (
    <div className="flex h-9 border-t border-[#a0a0a0] bg-[#d7d7e1]">
      <div className="flex h-[34px] w-[1461px] shrink-0 items-center border-b border-r border-[#a0a0a0] pl-[2px]">
        <div className="flex w-[175px] items-center">
          <ToolButton icon="novo" label="Novo" />
          <ToolButton icon="salvar" label="Salvar" />
          <ToolButton icon="folder" label="Abrir" />
          <button className="ml-1.5 flex items-center gap-1 text-sm font-bold text-[#0b465c]">
            <Icon name="bubbles" className="size-6" />
            CHAT
          </button>
        </div>
        <Divider />
        <div className="flex w-[66px] justify-center pr-1">
          <ToolButton icon="layersOn" label="Camadas" />
          <ToolButton icon="layersOff" label="Estados de camada" />
        </div>
        <Divider />
        <Combo label="Camada" value="0" width="w-[206px]" padding="pl-[62px]">
          <Swatch />
          <svg viewBox="0 0 16 16" className="size-4">
            <path d="M8 0v16M0 8h16M2 2l12 12M14 2L2 14" stroke={ORANGE} strokeWidth="1.4" />
            <circle cx="8" cy="8" r="4" fill={SAND} stroke={ORANGE} />
          </svg>
          <svg viewBox="0 0 14 16" className="h-4 w-[14px]">
            <path d="M4 5V4c0-4 6-4 6 0v3" fill="none" stroke={NAVY} strokeWidth="1.500" />
            <rect x="2" y="7" width="10" height="8" fill={SAND} stroke={NAVY} strokeWidth="1.500" />
            <path d="M7 9v4" stroke={NAVY} strokeWidth="2" />
          </svg>
        </Combo>
        <div className="w-1" />
        <Combo label="Cor" value="DaCamada" width="w-[144px]" padding="pl-[23px]">
          <Swatch />
        </Combo>
        <div className="w-[5px]" />
        <Combo label="Tipo de linha" value="DaCamada" width="w-[218px]" padding="pl-[75px]">
          <span className="ml-1 h-px w-[59px] bg-black" />
        </Combo>
        <div className="w-[6px]" />
        <Combo label="Espessura" value="0.00 mm" width="w-[147px]" padding="pl-[48px]">
          <span className="ml-1 h-px w-[34px] bg-black" />
        </Combo>
        <div className="w-[6px]" />
        <Combo label="Escala" value="1000" width="w-[70px]" padding="pl-[3px]" />
        <div className="w-[2px]" />
        <Divider />
        <ToolButton icon="undo" label="Desfazer" />
        <ToolButton icon="redo" label="Refazer" width="w-[33px]" />
        <Divider />
        <ToolButton icon="hand" label="Pan" width="w-[35px]" />
        <Divider />
        <div className="flex w-[128px] justify-center">
          <ToolButton icon="zoomWin" label="Zoom janela" />
          <ToolButton icon="zoomExt" label="Zoom extensão" />
          <ToolButton icon="zoomIn" label="Mais zoom" />
          <ToolButton icon="zoomOut" label="Menos zoom" />
        </div>
        <Divider />
        <ToolButton icon="vinculo" label="Tabela" width="w-[35px]" />
        <Divider />
        <ToolButton icon="fullscreen" label="Tela cheia" width="w-[35px]" />
        <Divider />
        <div className="flex flex-1 items-center pl-1">
          <button aria-label="Minimizar" className="flex h-4 w-[30px] items-end justify-center pb-px">
            <span className="h-[2px] w-[10px] bg-[#002b50]" />
          </button>
          <button aria-label="Restaurar" className="flex w-[30px] justify-center">
            <svg viewBox="0 0 16 8" className="h-2 w-4">
              <path d="M.7.700h8v5h-8zM7 2h8v5H7z" fill="#e6e6ee" stroke={NAVY} strokeWidth="1.400" />
            </svg>
          </button>
          <button aria-label="Fechar" className="flex w-[32px] justify-center">
            <svg viewBox="0 0 8 8" className="size-2">
              <path d="M.5.500l7 7M7.500.500l-7 7" stroke={NAVY} strokeWidth="2" />
            </svg>
          </button>
        </div>
      </div>
    </div>
  );
}

function ToolColumn({ tools, className }: { tools: [string, ReactNode][]; className: string }) {
  return (
    <div className={clsx("flex flex-col items-center overflow-hidden border-b border-[#a0a0a0]", className)}>
      <span className="mb-1 mt-[3px] h-[2px] w-full shrink-0 border-b border-[#a0a0a0] bg-white" />
      {tools.map(([name, drawing]) => (
        <button key={name} aria-label={name} className="flex h-[30px] w-6 shrink-0 items-center justify-center">
          <svg viewBox="0 0 24 24" className="size-[22px] overflow-visible">
            {drawing}
          </svg>
        </button>
      ))}
    </div>
  );
}

function DrawingArea() {
  return (
    <div className="relative min-h-0 flex-1 overflow-hidden border-b border-r border-t border-[#d4d4d4] bg-white">
      <svg className="absolute inset-0 size-full" fontFamily="Liberation Sans, Arial, sans-serif" fontSize="14">
        {POINTS.map(([id, x, y, elevation]) => (
          <Fragment key={id}>
            <text x={x - 1} y={y + 16} textAnchor="middle" fill="#ffdf85">
              {elevation}
            </text>
            <text x={x} y={y - 6} textAnchor="middle" fill={NAVY}>
              {id}
            </text>
            <text x={x + 5} y={y + 5} fill="#d2700f">
              Ponto
            </text>
            <circle cx={x} cy={y} r="2.5" fill="none" stroke="#000" />
            <circle cx={x} cy={y} r=".7" />
          </Fragment>
        ))}
        <path d="M51 167.500h365M233.500 3v347M228.500 162.500h10v10h-10z" fill="none" stroke="#000" shapeRendering="crispEdges" />
      </svg>
    </div>
  );
}

const modes: [string, string][] = [
  ["Ortho - F8", "w-[72px]"],
  ["Osnap - F3", "w-[73px]"],
  ["Atrib - F4", "w-[72px]"],
  ["SGrip - F5", "w-[72px]"],
  ["Grid - F7", "w-[72px]"],
  ["RTexto - F10", "w-[79px]"],
  ["Snap - F9", "w-[73px]"],
  ["Nome - F11", "w-[75px]"],
  ["Filtro - F12", "w-[72px]"],
  ["Snap Pto", "w-[72px]"],
  ["Snap 3D", "w-[72px]"],
];

export default function App() {
  const [enabled, setEnabled] = useState("Atrib - F4");

  return (
    <div className="flex h-screen flex-col overflow-hidden bg-white font-['DejaVu_Sans_Condensed','Open_Sans',sans-serif] text-black">
      <Ribbon />
      <div className="h-[3px] shrink-0 bg-[#f0f0fc]" />
      <Toolbar />

      <main className="flex min-h-0 flex-1">
        <aside className="flex w-16 shrink-0 items-start bg-[#d7d7e1]">
          <ToolColumn tools={editTools} className="w-7 border-r pr-2" />
          <ToolColumn tools={drawTools} className="ml-px w-[34px] border-r pr-[2px]" />
        </aside>

        <div className="flex min-w-0 flex-1 flex-col bg-[#f0f0fc] pr-[2px]">
          <DrawingArea />
          <div className="flex h-6 items-start text-[13px]">
            <button className="h-[22px] w-12 border-b border-r border-[#d4d4d4] bg-white font-bold">C A D</button>
            <button className="ml-[2px] h-[22px] w-[58px] border-b border-r border-[#cde6f7] bg-[#e5f1fb]">RASTER</button>
          </div>
        </div>

        <aside className="flex w-[31px] shrink-0 flex-col justify-center bg-[#d7d7e1]">
          <ToolColumn tools={snapTools} className="border-l border-t border-t-white" />
        </aside>
      </main>

      <footer className="shrink-0">
        <div className="flex h-[23px] items-center border-b-2 border-t border-b-[#a0a0a0] border-t-white bg-[#efefef] text-[13px]">
          <span className="w-[214px] shrink-0 whitespace-nowrap border-r border-[#a0a0a0] pl-[6px] text-xs leading-5">
            810.00122 , 1050.69968
          </span>
          {modes.map(([name, width]) => (
            <button
              key={name}
              onClick={() => setEnabled(name)}
              className={clsx(
                "h-5 shrink-0 whitespace-nowrap border-r leading-4",
                width,
                name === enabled
                  ? "border-l-2 border-t-2 border-[#696969] border-r-white bg-[#e8ffd8] text-[#0066cc]"
                  : "border-[#a0a0a0] text-[#808080]"
              )}
            >
              {name}
            </button>
          ))}
        </div>
        <div className="flex h-12 overflow-hidden border-l border-t border-[#e3e3e3]">
          <div className="flex-1 whitespace-pre pl-[2px] pt-1 text-[15px] leading-5">
            <p> Zoom: Extensão (Extents).</p>
            <p>Comando: {"<Representação de Textos como retângulo desligado>"}</p>
            <p className="font-bold leading-3">Comando:</p>
          </div>
          <div className="flex w-[15px] flex-col items-center bg-[#f0f0f0] pt-2">
            <span className="h-4 w-full bg-gradient-to-r from-[#8c8c88] to-[#555]" />
            <svg viewBox="0 0 8 8" className="mt-2 size-2">
              <path d="M0 2h8L4 6z" fill="#606060" />
            </svg>
          </div>
        </div>
      </footer>
    </div>
  );
}
